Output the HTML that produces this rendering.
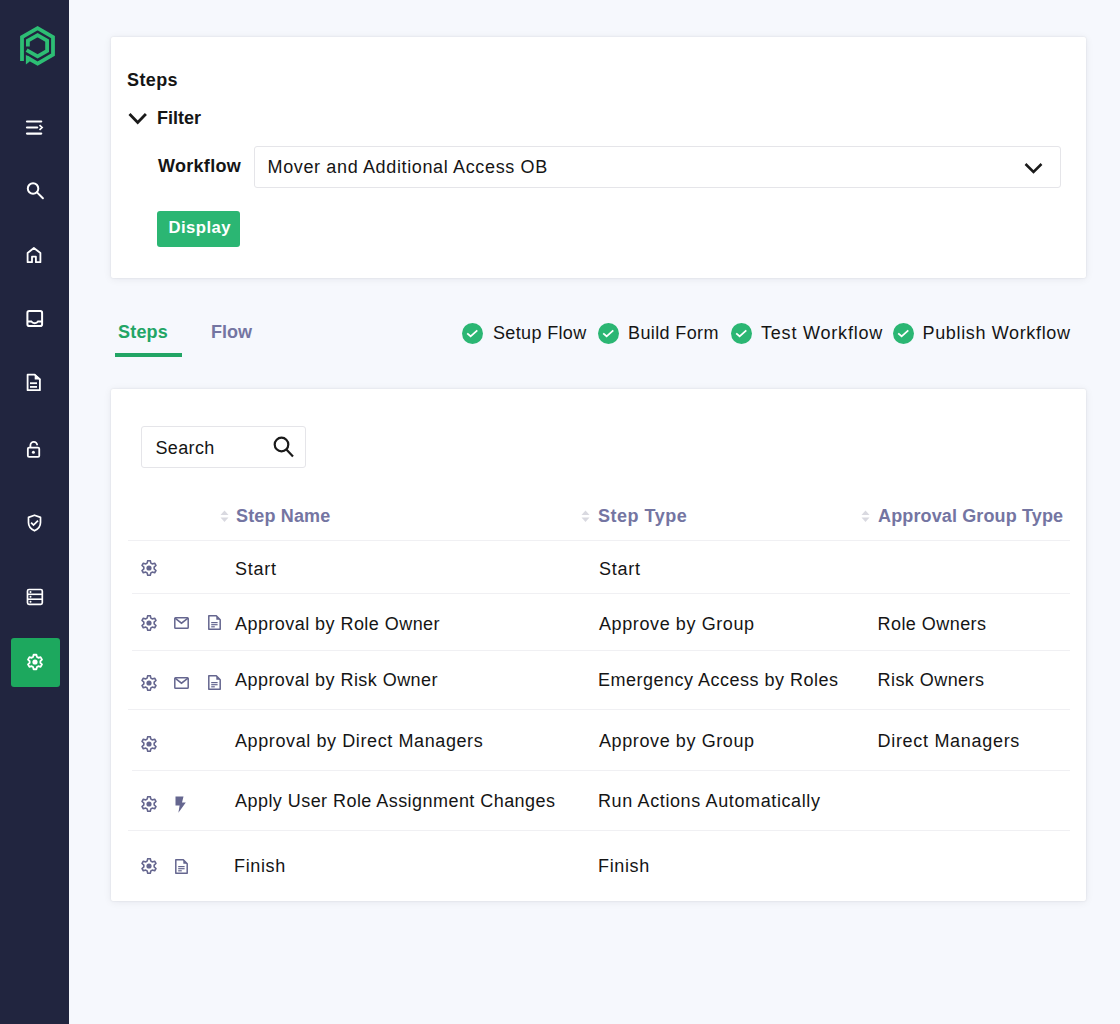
<!DOCTYPE html>
<html><head><meta charset="utf-8">
<style>
*{margin:0;padding:0;box-sizing:border-box}
html,body{width:1120px;height:1024px;overflow:hidden;background:#F6F8FD;font-family:"Liberation Sans",sans-serif;color:#151515}
.a{position:absolute}
.t{position:absolute;white-space:nowrap;line-height:1}
#side{position:absolute;left:0;top:0;width:69px;height:1024px;background:#21253F}
.card{position:absolute;background:#fff;border-radius:2px;box-shadow:0 0 2px rgba(0,0,0,0.11),0 1px 8px rgba(10,10,40,0.07)}
.b{font-weight:bold}
.r{font-size:18px;letter-spacing:0.45px}
.hd{font-size:18px;font-weight:bold;color:#7475A2;letter-spacing:0.15px}
.line{position:absolute;left:128px;width:942px;height:1px;background:#F0F0F3}
svg{position:absolute;overflow:visible}
</style></head><body>
<div id="side">
  <!-- logo -->
  <svg style="left:14px;top:20px" width="48" height="52" viewBox="0 0 48 52">
    <g fill="none" stroke="#2DBE74" stroke-width="3.8" stroke-linejoin="miter">
      <polyline points="8,41 8,17 23.6,8.1 39,17 39,34.7 23.6,43.6 13,37.5"/>
      <polyline points="13.9,26.6 13.9,20.7 23.6,15.2 33.1,20.7 33.1,30.9 23.6,36.4 12.6,30.1"/>
    </g>
    <polygon points="11.9,35 14.5,36.2 15.7,39 15.7,41.4 11.9,44.5" fill="#2DBE74"/>
  </svg>
  <!-- menu -->
  <svg style="left:25px;top:119px" width="19" height="17" viewBox="0 0 19 17">
    <g fill="none" stroke="#fff" stroke-width="2.2">
      <line x1="2" y1="2.5" x2="16.2" y2="2.5" stroke-linecap="round"/>
      <line x1="2" y1="8.5" x2="12.2" y2="8.5" stroke-linecap="round"/>
      <line x1="2" y1="14.55" x2="16.2" y2="14.55" stroke-linecap="round"/>
      <polyline points="14.5,6.1 17.1,8.5 14.5,10.9" stroke-width="1.7"/>
    </g>
  </svg>
  <!-- search -->
  <svg style="left:25px;top:180px" width="20" height="21" viewBox="0 0 20 21">
    <g fill="none" stroke="#fff" stroke-width="2">
      <circle cx="8.05" cy="8.5" r="5.25"/>
      <line x1="12" y1="12.4" x2="17.9" y2="18.3" stroke-linecap="round"/>
    </g>
  </svg>
  <!-- home -->
  <svg style="left:26px;top:246px" width="16" height="18" viewBox="0 0 16 18">
    <path d="M1.6,16.2 V7 L7.9,2 L14.4,7 V16.2 H9.9 V10.7 H6 V16.2 Z" fill="none" stroke="#fff" stroke-width="1.8" stroke-linejoin="round"/>
  </svg>
  <!-- inbox -->
  <svg style="left:26px;top:310px" width="17" height="17" viewBox="0 0 17 17">
    <rect x="1.4" y="1.1" width="14.7" height="15" rx="1.8" fill="none" stroke="#fff" stroke-width="2"/>
    <path d="M1.4,11.5 H5.3 Q6.6,13.2 8.7,13.2 Q10.8,13.2 12,11.5 H16.1" fill="none" stroke="#fff" stroke-width="2"/>
  </svg>
  <!-- doc -->
  <svg style="left:26px;top:373px" width="16" height="19" viewBox="0 0 16 19">
    <path d="M1.6,1.7 H8.7 L13.9,6.4 V17.2 H1.6 Z" fill="none" stroke="#fff" stroke-width="1.8" stroke-linejoin="round"/>
    <polygon points="8.7,0.9 14.7,6.1 14.7,6.6 8.7,6.6" fill="#fff"/>
    <line x1="4" y1="10.2" x2="11" y2="10.2" stroke="#fff" stroke-width="1.8"/>
    <line x1="4" y1="13.9" x2="11" y2="13.9" stroke="#fff" stroke-width="1.8"/>
  </svg>
  <!-- lock -->
  <svg style="left:26px;top:440px" width="16" height="19" viewBox="0 0 16 19">
    <path d="M4.4,7.5 V5.2 A3.4,3.4 0 0 1 11.2,5.2" fill="none" stroke="#fff" stroke-width="1.8"/>
    <rect x="1.85" y="7.55" width="11.4" height="9.4" rx="1.2" fill="none" stroke="#fff" stroke-width="1.8"/>
    <circle cx="7.4" cy="12.2" r="1.5" fill="#fff"/>
  </svg>
  <!-- shield -->
  <svg style="left:26px;top:513px" width="17" height="20" viewBox="0 0 17 20">
    <path d="M8.5,2.2 L14.5,4.4 V9.5 C14.5,13.5 11.8,16.3 8.5,17.8 C5.2,16.3 2.5,13.5 2.5,9.5 V4.4 Z" fill="none" stroke="#fff" stroke-width="1.7" stroke-linejoin="round"/>
    <polyline points="5.1,9.7 7.5,12.1 12,7.6" fill="none" stroke="#fff" stroke-width="1.8"/>
  </svg>
  <!-- server -->
  <svg style="left:26px;top:588px" width="18" height="18" viewBox="0 0 18 18">
    <rect x="1.5" y="1.5" width="14.8" height="14.8" rx="1.5" fill="none" stroke="#fff" stroke-width="1.7"/>
    <line x1="1.5" y1="6.3" x2="16.3" y2="6.3" stroke="#fff" stroke-width="1.6"/>
    <line x1="1.5" y1="11.2" x2="16.3" y2="11.2" stroke="#fff" stroke-width="1.6"/>
    <circle cx="4.5" cy="3.9" r="1" fill="#fff"/>
    <circle cx="4.5" cy="8.75" r="1" fill="#fff"/>
    <circle cx="4.5" cy="13.7" r="1" fill="#fff"/>
  </svg>
  <!-- active settings -->
  <div class="a" style="left:11px;top:638px;width:49px;height:49px;background:#1DA85E;border-radius:3px"></div>
  <svg style="left:25.4px;top:652.3px" width="20" height="20" viewBox="0 0 20 20">
    <path d="M7.30,5.32 L8.06,4.96 L8.59,2.74 L11.41,2.74 L11.94,4.96 L12.70,5.32 L13.40,5.80 L15.58,5.15 L17.00,7.59 L15.33,9.16 L15.40,10.00 L15.33,10.84 L17.00,12.41 L15.58,14.85 L13.40,14.20 L12.70,14.68 L11.94,15.04 L11.41,17.26 L8.59,17.26 L8.06,15.04 L7.30,14.68 L6.60,14.20 L4.42,14.85 L3.00,12.41 L4.67,10.84 L4.60,10.00 L4.67,9.16 L3.00,7.59 L4.42,5.15 L6.60,5.80 Z" fill="none" stroke="#fff" stroke-width="1.8" stroke-linejoin="round"/>
    <circle cx="10" cy="10" r="2.6" fill="#fff"/>
  </svg>
</div>

<!-- filter card -->
<div class="card" style="left:111px;top:37px;width:975px;height:241px"></div>
<div class="t b" style="left:127px;top:71px;font-size:18px;letter-spacing:0.4px">Steps</div>
<svg style="left:128px;top:112px" width="20" height="13" viewBox="0 0 20 13">
  <polyline points="1.5,2 9.7,10.5 17.9,2" fill="none" stroke="#1a1a1a" stroke-width="2.8"/>
</svg>
<div class="t b" style="left:157px;top:109px;font-size:18px">Filter</div>
<div class="t b" style="left:158px;top:157px;font-size:18px;letter-spacing:0.3px">Workflow</div>
<div class="a" style="left:254px;top:146px;width:807px;height:42px;border:1px solid #E5E5E9;border-radius:3px;background:#fff"></div>
<div class="t r" style="left:267.5px;top:157.5px;letter-spacing:0.64px">Mover and Additional Access OB</div>
<svg style="left:1024px;top:162px" width="20" height="13" viewBox="0 0 20 13">
  <polyline points="1.5,2 9.5,10 17.5,2" fill="none" stroke="#1a1a1a" stroke-width="2.5"/>
</svg>
<div class="a" style="left:157px;top:211px;width:83px;height:36px;background:#2BB673;border-radius:3px"></div>
<div class="t b" style="left:168.5px;top:219.5px;font-size:16.7px;color:#fff;letter-spacing:0.45px">Display</div>

<!-- tabs -->
<div class="t b" style="left:118px;top:322.5px;font-size:18px;color:#22A565;letter-spacing:0.2px">Steps</div>
<div class="t b" style="left:211px;top:322.5px;font-size:18px;color:#7475A2">Flow</div>
<div class="a" style="left:115px;top:353px;width:67px;height:4px;background:#22A565"></div>

<!-- status -->
<svg style="left:462px;top:323px" width="21" height="21" viewBox="0 0 21 21"><circle cx="10.5" cy="10.5" r="10.5" fill="#2BB673"/><polyline points="5.2,10.4 8.6,13.3 15.3,7.3" fill="none" stroke="#fff" stroke-width="1.8"/></svg>
<div class="t r" style="left:493px;top:324px;letter-spacing:0.35px">Setup Flow</div>
<svg style="left:598px;top:323px" width="21" height="21" viewBox="0 0 21 21"><circle cx="10.5" cy="10.5" r="10.5" fill="#2BB673"/><polyline points="5.2,10.4 8.6,13.3 15.3,7.3" fill="none" stroke="#fff" stroke-width="1.8"/></svg>
<div class="t r" style="left:628px;top:324px;letter-spacing:0.38px">Build Form</div>
<svg style="left:731px;top:323px" width="21" height="21" viewBox="0 0 21 21"><circle cx="10.5" cy="10.5" r="10.5" fill="#2BB673"/><polyline points="5.2,10.4 8.6,13.3 15.3,7.3" fill="none" stroke="#fff" stroke-width="1.8"/></svg>
<div class="t r" style="left:761px;top:324px;letter-spacing:0.8px">Test Workflow</div>
<svg style="left:892.5px;top:323px" width="21" height="21" viewBox="0 0 21 21"><circle cx="10.5" cy="10.5" r="10.5" fill="#2BB673"/><polyline points="5.2,10.4 8.6,13.3 15.3,7.3" fill="none" stroke="#fff" stroke-width="1.8"/></svg>
<div class="t r" style="left:922.5px;top:324px;letter-spacing:0.65px">Publish Workflow</div>

<!-- table card -->
<div class="card" style="left:111px;top:389px;width:975px;height:512px"></div>
<div class="a" style="left:141px;top:426px;width:165px;height:42px;border:1px solid #E5E5E9;border-radius:3px;background:#fff"></div>
<div class="t r" style="left:155.5px;top:438.5px;letter-spacing:0.35px">Search</div>
<svg style="left:273px;top:435.8px" width="22" height="23" viewBox="0 0 22 23">
  <g fill="none" stroke="#1a1a1a" stroke-width="2.2"><circle cx="8.5" cy="8.5" r="6.8"/><line x1="13.4" y1="13.6" x2="20" y2="20.5"/></g>
</svg>

<!-- header -->
<svg style="left:220px;top:510px" width="9" height="13" viewBox="0 0 9 13"><polygon points="4.5,0.5 8.5,5 0.5,5" fill="#D9D9E0"/><polygon points="0.5,7.5 8.5,7.5 4.5,12" fill="#D9D9E0"/></svg>
<div class="t hd" style="left:236px;top:506.5px">Step Name</div>
<svg style="left:581px;top:510px" width="9" height="13" viewBox="0 0 9 13"><polygon points="4.5,0.5 8.5,5 0.5,5" fill="#D9D9E0"/><polygon points="0.5,7.5 8.5,7.5 4.5,12" fill="#D9D9E0"/></svg>
<div class="t hd" style="left:598px;top:506.5px;letter-spacing:0.5px">Step Type</div>
<svg style="left:861px;top:510px" width="9" height="13" viewBox="0 0 9 13"><polygon points="4.5,0.5 8.5,5 0.5,5" fill="#D9D9E0"/><polygon points="0.5,7.5 8.5,7.5 4.5,12" fill="#D9D9E0"/></svg>
<div class="t hd" style="left:878px;top:506.5px;letter-spacing:0.13px">Approval Group Type</div>

<div class="line" style="top:540px"></div>
<div class="line" style="top:593px;left:132px;width:938px"></div>
<div class="line" style="top:650px;left:132px;width:938px"></div>
<div class="line" style="top:709px"></div>
<div class="line" style="top:770px;left:132px;width:938px"></div>
<div class="line" style="top:830px"></div>

<!-- rows -->
<div class="t r" style="left:235px;top:559.5px;letter-spacing:0.75px">Start</div>
<div class="t r" style="left:599px;top:559.5px;letter-spacing:0.75px">Start</div>

<div class="t r" style="left:235px;top:615px">Approval by Role Owner</div>
<div class="t r" style="left:599px;top:615px;letter-spacing:0.6px">Approve by Group</div>
<div class="t r" style="left:877.5px;top:615px;letter-spacing:0.45px">Role Owners</div>

<div class="t r" style="left:235px;top:671px">Approval by Risk Owner</div>
<div class="t r" style="left:598px;top:671px;letter-spacing:0.5px">Emergency Access by Roles</div>
<div class="t r" style="left:877.5px;top:671px;letter-spacing:0.45px">Risk Owners</div>

<div class="t r" style="left:235px;top:731.5px;letter-spacing:0.6px">Approval by Direct Managers</div>
<div class="t r" style="left:599px;top:731.5px;letter-spacing:0.6px">Approve by Group</div>
<div class="t r" style="left:877.5px;top:731.5px;letter-spacing:0.7px">Direct Managers</div>

<div class="t r" style="left:235px;top:792px">Apply User Role Assignment Changes</div>
<div class="t r" style="left:598px;top:792px;letter-spacing:0.62px">Run Actions Automatically</div>

<div class="t r" style="left:234px;top:857px;letter-spacing:0.65px">Finish</div>
<div class="t r" style="left:598px;top:857px;letter-spacing:0.65px">Finish</div>

<!-- row icons -->
<svg width="0" height="0" style="position:absolute">
<defs>
<symbol id="gr" viewBox="0 0 16 16"><path d="M5.40,3.50 L6.14,3.15 L6.72,0.71 L9.28,0.71 L9.86,3.15 L10.60,3.50 L11.27,3.96 L13.67,3.24 L14.95,5.47 L13.14,7.19 L13.20,8.00 L13.14,8.81 L14.95,10.53 L13.67,12.76 L11.27,12.04 L10.60,12.50 L9.86,12.85 L9.28,15.29 L6.72,15.29 L6.14,12.85 L5.40,12.50 L4.73,12.04 L2.33,12.76 L1.05,10.53 L2.86,8.81 L2.80,8.00 L2.86,7.19 L1.05,5.47 L2.33,3.24 L4.73,3.96 Z" fill="none" stroke="#65668F" stroke-width="1.6" stroke-linejoin="round"/><circle cx="8" cy="8" r="2.6" fill="#65668F"/></symbol>
<symbol id="ml" viewBox="0 0 15 12"><rect x="0.8" y="0.8" width="13.4" height="10.4" rx="0.8" fill="none" stroke="#65668F" stroke-width="1.5"/><polyline points="1,1.2 7.5,6.2 14,1.2" fill="none" stroke="#65668F" stroke-width="1.5"/></symbol>
<symbol id="dc" viewBox="0 0 13 15"><path d="M0.8,0.8 H8.3 L12.2,4.7 V14.2 H0.8 Z" fill="none" stroke="#65668F" stroke-width="1.5" stroke-linejoin="round"/><polygon points="8.3,0.8 12.2,4.7 8.3,4.7" fill="#65668F"/><line x1="3.2" y1="7.6" x2="9.6" y2="7.6" stroke="#65668F" stroke-width="1.2"/><line x1="3.2" y1="9.7" x2="9.6" y2="9.7" stroke="#65668F" stroke-width="1.2"/><line x1="3.2" y1="11.8" x2="6.8" y2="11.8" stroke="#65668F" stroke-width="1.2"/></symbol>
<symbol id="bt" viewBox="0 0 11 17"><polygon points="0.5,0.5 8.5,0.5 7,6.5 10.8,6.5 3.4,16.8 4.6,9.6 0.5,9.6" fill="#65668F"/></symbol>
</defs></svg>
<svg style="left:141.4px;top:560px" width="16" height="16"><use href="#gr"/></svg>
<svg style="left:141.4px;top:615px" width="16" height="16"><use href="#gr"/></svg>
<svg style="left:141.4px;top:675px" width="16" height="16"><use href="#gr"/></svg>
<svg style="left:141.4px;top:736px" width="16" height="16"><use href="#gr"/></svg>
<svg style="left:141.4px;top:796px" width="16" height="16"><use href="#gr"/></svg>
<svg style="left:141.4px;top:858px" width="16" height="16"><use href="#gr"/></svg>
<svg style="left:173.8px;top:617.2px" width="15" height="12"><use href="#ml"/></svg>
<svg style="left:208px;top:614.7px" width="13" height="15"><use href="#dc"/></svg>
<svg style="left:173.8px;top:677.4px" width="15" height="12"><use href="#ml"/></svg>
<svg style="left:208px;top:674.9px" width="13" height="15"><use href="#dc"/></svg>
<svg style="left:175.4px;top:795.6px" width="11" height="17"><use href="#bt"/></svg>
<svg style="left:174.6px;top:858.5px" width="13" height="15"><use href="#dc"/></svg>
</body></html>
